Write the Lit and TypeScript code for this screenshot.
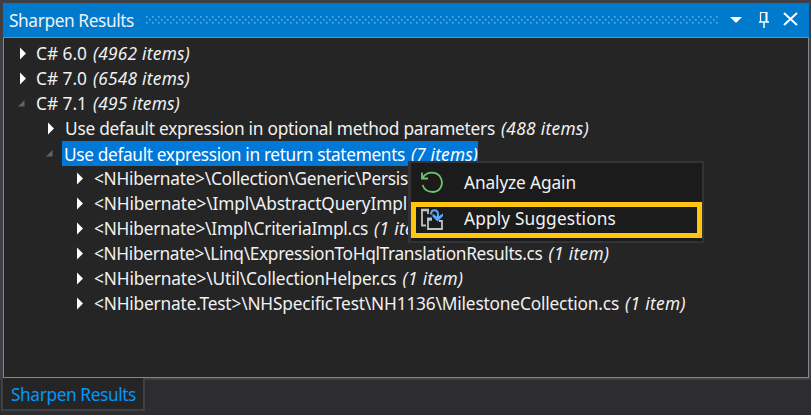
import { LitElement, html, css, svg } from "lit";
import { customElement, property } from "lit/decorators.js";

/** A run of text whose tracking is set so that it fills a given width. */
@customElement("fit-text")
class FitText extends LitElement {
  @property() text = "";
  @property({ type: Number }) width = 0;
  static styles = css`
    :host { display: inline-block; white-space: pre; }
    .run { display: inline-block; }
  `;
  render() { return html`<span class="run">${this.text}</span>`; }
  updated() {
    const run = this.renderRoot.querySelector(".run") as HTMLElement;
    run.style.letterSpacing = "0px";
    const natural = run.getBoundingClientRect().width;
    run.style.letterSpacing = (this.width - natural) / this.text.length + "px";
  }
}

type Row = { level: number; open?: boolean; selected?: boolean; text: string; width: number; note?: string; noteWidth?: number };

const rows: Row[] = [
  { level: 0, text: "C# 6.0", width: 51, note: "(4962 items)", noteWidth: 97 },
  { level: 0, text: "C# 7.0", width: 51, note: "(6548 items)", noteWidth: 97 },
  { level: 0, open: true, text: "C# 7.1", width: 51, note: "(495 items)", noteWidth: 87 },
  { level: 1, text: "Use default expression in optional method parameters", width: 430, note: "(488 items)", noteWidth: 88 },
  { level: 1, open: true, selected: true, text: "Use default expression in return statements", width: 341, note: "(7 items)", noteWidth: 67 },
  { level: 2, text: "<NHibernate>\\Collection\\Generic\\Persis", width: 314 },
  { level: 2, text: "<NHibernate>\\Impl\\AbstractQueryImpl", width: 313 },
  { level: 2, text: "<NHibernate>\\Impl\\CriteriaImpl.cs", width: 274, note: "(1 item)", noteWidth: 61 },
  { level: 2, text: "<NHibernate>\\Linq\\ExpressionToHqlTranslationResults.cs", width: 448.5, note: "(1 item)", noteWidth: 61 },
  { level: 2, text: "<NHibernate>\\Util\\CollectionHelper.cs", width: 302.5, note: "(1 item)", noteWidth: 61 },
  { level: 2, text: "<NHibernate.Test>\\NHSpecificTest\\NH1136\\MilestoneCollection.cs", width: 525, note: "(1 item)", noteWidth: 61 },
];

@customElement("app-root")
class AppRoot extends LitElement {
  static styles = css`
    :host { display: block; width: 811px; height: 415px; box-sizing: border-box; overflow: hidden; position: relative;
      background: #2d2d30; font: 17.3px/25px "Noto Sans", "Open Sans", sans-serif; color: #f1f1f1; }
    * { box-sizing: border-box; }
    svg { display: block; flex: none; }
    .frame { height: 380px; padding: 3px 2px 2px 3px; background: #3f3f46; }
    .title { height: 34px; background: #007acc; display: flex; align-items: center; padding: 0 11px 0 6px; }
    .title fit-text { width: 125px; }
    .grip { margin-left: 12px; width: 573px; height: 8px; }
    .buttons { margin-left: 11px; }
    .body { height: 341px; border: 1px solid #828790; background: #252526; padding-top: 3px; }
    .row { display: flex; height: 25px; align-items: center; white-space: pre; }
    .level0 { padding-left: 12px; }
    .level1 { padding-left: 40px; }
    .level2 { padding-left: 69px; }
    .label { display: flex; height: 25px; margin-left: 6px; padding-left: 2px; }
    .level1 .label { margin-left: 6px; padding-left: 3px; }
    .level2 .label { padding-left: 3px; }
    .level1 .selected { padding-left: 2px; background: #0078d7; color: #fff; line-height: 27px; }
    .note { font-style: italic; margin-left: 6px; }
    .tab { width: 144px; height: 33px; margin: -2px 0 0 1px; position: relative; background: #252526; border: 2px solid #3f3f46; border-top: 0; color: #0097fb; padding: 4px 0 0 8px; }
    .menu { position: absolute; left: 408px; top: 161px; width: 296px; height: 82px; background: #1b1b1c; border: 2px solid #333337; border-left-width: 3px; padding-top: 1px; }
    .item { height: 38px; display: flex; align-items: center; padding-left: 10px; line-height: 23px; }
    .item fit-text { margin-left: 21px; padding-bottom: 2px; }
    .marked { height: 36px; border: 5px solid #ffc60d; padding: 0 0 2px 5px; }
  `;

  arrow(open?: boolean) {
    return html`<svg width="12" height="16">${open
      ? svg`<path d="M8.5 4V10.5H2Z" fill="#626264"/>`
      : svg`<path d="M4 1.5L10 7.5L4 13.5Z" fill="#fff"/>`}</svg>`;
  }

  render() {
    return html`
      <div class="frame">
        <div class="title">
          <fit-text text="Sharpen Results" .width=${125}></fit-text>
          <svg class="grip"><defs><pattern id="dots" width="6" height="6" patternUnits="userSpaceOnUse">
            <path d="M0 0h2v2h-2zM3 3h2v2h-2z" fill="#2e93d9"/><path d="M0 0h1v1h-1zM3 3h1v1h-1z" fill="#62b2e6"/></pattern></defs>
            <rect width="573" height="8" fill="url(#dots)"/></svg>
          <svg class="buttons" width="72" height="20" fill="none" stroke="#fff">
            <path d="M0 7H12L6 13Z" fill="#fff" stroke="none"/>
            <path d="M30.5 12V2.5H37" stroke-width="1.2"/><path d="M29 12H39M34 12V18" stroke-width="1.5"/><path d="M36.5 2V12" stroke-width="2"/>
            <path d="M54 3L67 15M67 3L54 15" stroke-width="2"/>
          </svg>
        </div>
        <div class="body">
          ${rows.map(r => html`<div class="row level${r.level}">${this.arrow(r.open)}
            <div class="label ${r.selected ? "selected" : ""}"><fit-text .text=${r.text} .width=${r.width}></fit-text>${r.note
              ? html`<fit-text class="note" .text=${r.note} .width=${r.noteWidth}></fit-text>` : ""}</div></div>`)}
        </div>
      </div>
      <div class="tab"><fit-text text="Sharpen Results" .width=${125}></fit-text></div>
      <div class="menu">
        <div class="item">
          <svg width="22" height="24" fill="none" stroke="#6cc76c" stroke-width="1.8"><path d="M1 1.5V7.5H7M1.5 7C6 -0.5 17 0 20 7.5C23 15 18 21 12 21C7 21 3 18 1.5 14"/></svg>
          <fit-text text="Analyze Again" .width=${112}></fit-text>
        </div>
        <div class="item marked">
          <svg width="22" height="24" fill="none" stroke="#c0c0c0" stroke-width="1.8">
            <path d="M5 18.5H1V3H7V7"/><path d="M0.1 3H8" stroke-width="2.6"/><path d="M11 11.5H7V22H21V14H18"/><path d="M6.1 12.5H11" stroke-width="2.4"/>
            <path d="M10 7.5C10 2 17 1.5 17 8V11" stroke="#55aaff" stroke-width="2"/><path d="M11.5 6.5L16.5 10L22 6.5V9L16.5 14.5L11.5 9.5Z" fill="#55aaff" stroke="none"/></svg>
          <fit-text text="Apply Suggestions" .width=${152}></fit-text>
        </div>
      </div>`;
  }
}
